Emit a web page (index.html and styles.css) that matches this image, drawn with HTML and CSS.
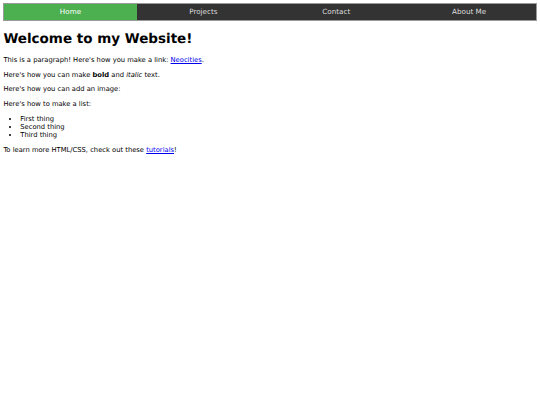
FILE: index.html
```html
<!DOCTYPE html>
<html>
<head>
<meta charset="utf-8">
<title>My Website</title>
<link rel="stylesheet" href="styles.css">
</head>
<body>
<ul class="nav">
  <li><a class="active" href="#">Home</a></li>
  <li><a href="#">Projects</a></li>
  <li><a href="#">Contact</a></li>
  <li><a href="#">About Me</a></li>
</ul>
<h1>Welcome to my Website!</h1>
<p>This is a paragraph! Here's how you make a link: <a href="#">Neocities</a>.</p>
<p>Here's how you can make <strong>bold</strong> and <em>italic</em> text.</p>
<p>Here's how you can add an image:</p>
<p>Here's how to make a list:</p>
<ul class="list">
  <li>First thing</li>
  <li>Second thing</li>
  <li>Third thing</li>
</ul>
<p>To learn more HTML/CSS, check out these <a href="#">tutorials</a>!</p>
</body>
</html>
```
FILE: styles.css
```css
html, body {
  background: #fff;
}
body {
  margin: 3.4px;
  font-family: "DejaVu Sans", Verdana, sans-serif;
  font-size: 6.75px;
  color: #000;
  text-rendering: geometricPrecision;
}
.nav {
  list-style: none;
  margin: 0 0 0 -0.4px;
  padding: 0;
  display: flex;
  background: #333;
  border: 1px solid #999;
}
.nav li {
  flex: 1 1 0;
}
.nav a {
  display: block;
  text-align: center;
  color: #ddd;
  text-decoration: none;
  font-size: 7.2px;
  line-height: 16px;
}
.nav a.active {
  background: #4caf50;
  color: #fff;
}
h1 {
  font-size: 13.5px;
  margin: 9.2px 0;
}
p {
  margin: 6.75px 0;
}
.list {
  margin: 6.75px 0;
  padding-left: 16.9px;
}
a {
  color: #00e;
}
```
